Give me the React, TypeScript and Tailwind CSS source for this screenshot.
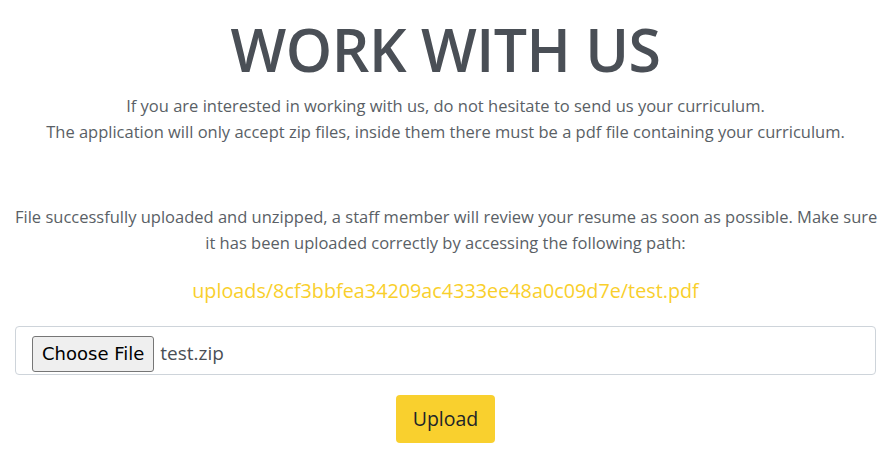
export default function App() {
  return (
    <div
      className="min-h-[467px] bg-white px-[15px] text-center text-[#5a5f66]"
      style={{ fontFamily: '"Open Sans", "Noto Sans", sans-serif' }}
    >
      <h1 className="pt-[16px] text-[59px] font-semibold leading-[66px] tracking-[-0.5px] text-[#4a4f56]">
        WORK WITH US
      </h1>
      <p className="mt-[11px] text-[16.5px] leading-[26px]">
        If you are interested in working with us, do not hesitate to send us your curriculum.
        <br />
        The application will only accept zip files, inside them there must be a pdf file containing your curriculum.
      </p>

      <p className="mt-[59px] whitespace-nowrap text-[16.5px] leading-[26px]">
        File successfully uploaded and unzipped, a staff member will review your resume as soon as possible. Make sure
        <br />
        it has been uploaded correctly by accessing the following path:
      </p>
      <p className="mt-[22px] text-[19.8px] leading-[26px] text-[#f9cf2c]">
        uploads/8cf3bbfea34209ac4333ee48a0c09d7e/test.pdf
      </p>

      <div className="mt-[22px] flex h-[49px] items-center rounded-[4px] border border-[#ced4da] px-[16px] pt-[6px] text-left">
        <span
          className="flex h-[36px] items-center rounded-[3px] border border-[#767676] bg-[#efefef] px-[9px] text-[18px] text-black"
          style={{ fontFamily: '"DejaVu Sans", sans-serif' }}
        >
          Choose File
        </span>
        <span className="ml-[6px] text-[19px] text-[#4a4f56]">test.zip</span>
      </div>

      <div className="mt-[20px] flex justify-center">
        <button className="h-[48px] w-[99px] rounded-[4px] bg-[#f9d02e] text-[19.5px] text-[#212529]">Upload</button>
      </div>
    </div>
  )
}
